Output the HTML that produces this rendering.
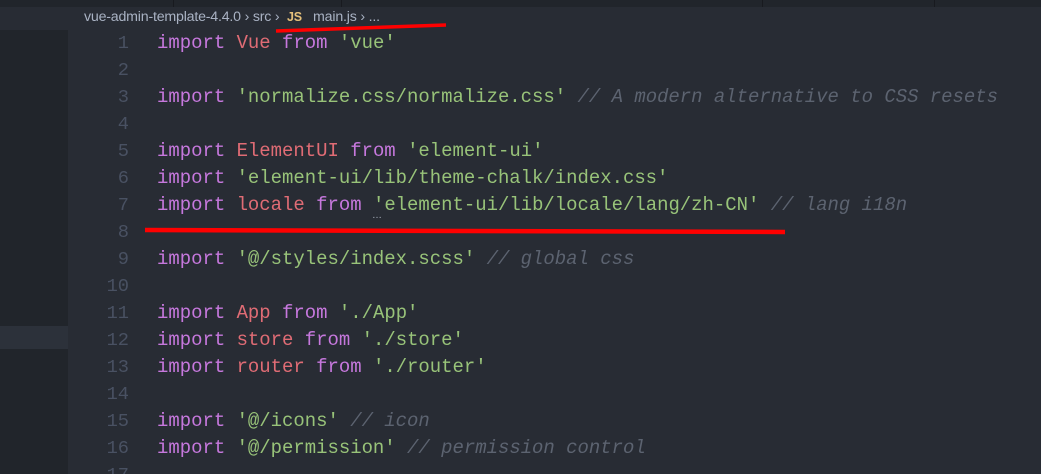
<!DOCTYPE html>
<html><head><meta charset="utf-8"><style>
html,body{margin:0;padding:0;width:1041px;height:474px;overflow:hidden;background:#282c34;position:relative}
.top{position:absolute;left:0;top:0;width:1041px;height:7px;background:#21252b}
.sep{position:absolute;top:0;width:1px;height:7px;background:#181a1f}
.side{position:absolute;left:0;top:30px;width:68px;height:444px;background:#21252b}
.hl{position:absolute;left:0;top:326px;width:68px;height:23px;background:#2c313a}
.bc{position:absolute;left:84px;top:9px;font:14.2px "Liberation Sans",sans-serif;color:#a9b2c3;white-space:pre;letter-spacing:-0.2px}
.bc .js{color:#e5c07b;font-weight:bold;font-size:12.5px}
.code{position:absolute;left:0;top:30px;font:18.95px/27px "Liberation Mono",monospace;white-space:pre}
.ln{display:inline-block;width:129px;text-align:right;color:#495162;padding-right:28px;font-size:18.7px}
.k{color:#c678dd}.v{color:#e06c75}.s{color:#98c379}.c{color:#5c6370;font-style:italic}.p{color:#abb2bf}
</style></head><body>
<div class="top"></div>
<div class="sep" style="left:173px"></div><div class="sep" style="left:341px"></div><div class="sep" style="left:762px"></div><div class="sep" style="left:934px"></div>
<div class="side"></div><div class="hl"></div>
<div class="bc">vue-admin-template-4.4.0 › src ›  <span class="js">JS</span>   main.js › ...</div>
<div class="code"><div><span class="ln">1</span><span class="k">import</span> <span class="v">Vue</span> <span class="k">from</span> <span class="s">'vue'</span></div><div><span class="ln">2</span></div><div><span class="ln">3</span><span class="k">import</span> <span class="s">'normalize.css/normalize.css'</span> <span class="c">// A modern alternative to CSS resets</span></div><div><span class="ln">4</span></div><div><span class="ln">5</span><span class="k">import</span> <span class="v">ElementUI</span> <span class="k">from</span> <span class="s">'element-ui'</span></div><div><span class="ln">6</span><span class="k">import</span> <span class="s">'element-ui/lib/theme-chalk/index.css'</span></div><div><span class="ln">7</span><span class="k">import</span> <span class="v">locale</span> <span class="k">from</span> <span class="s">'element-ui/lib/locale/lang/zh-CN'</span> <span class="c">// lang i18n</span></div><div><span class="ln">8</span></div><div><span class="ln">9</span><span class="k">import</span> <span class="s">'@/styles/index.scss'</span> <span class="c">// global css</span></div><div><span class="ln">10</span></div><div><span class="ln">11</span><span class="k">import</span> <span class="v">App</span> <span class="k">from</span> <span class="s">'./App'</span></div><div><span class="ln">12</span><span class="k">import</span> <span class="v">store</span> <span class="k">from</span> <span class="s">'./store'</span></div><div><span class="ln">13</span><span class="k">import</span> <span class="v">router</span> <span class="k">from</span> <span class="s">'./router'</span></div><div><span class="ln">14</span></div><div><span class="ln">15</span><span class="k">import</span> <span class="s">'@/icons'</span> <span class="c">// icon</span></div><div><span class="ln">16</span><span class="k">import</span> <span class="s">'@/permission'</span> <span class="c">// permission control</span></div><div><span class="ln">17</span></div></div>
<div style="position:absolute;left:372px;top:210px;color:#abb2bf;font:10px 'Liberation Sans',sans-serif">…</div>
<svg style="position:absolute;left:0;top:0" width="1041" height="474"><path d="M276 31 L446 25" stroke="#ff0000" stroke-width="3.5" fill="none"/><path d="M145 230 L785 232" stroke="#ff0000" stroke-width="4.5" fill="none"/></svg>
</body></html>
